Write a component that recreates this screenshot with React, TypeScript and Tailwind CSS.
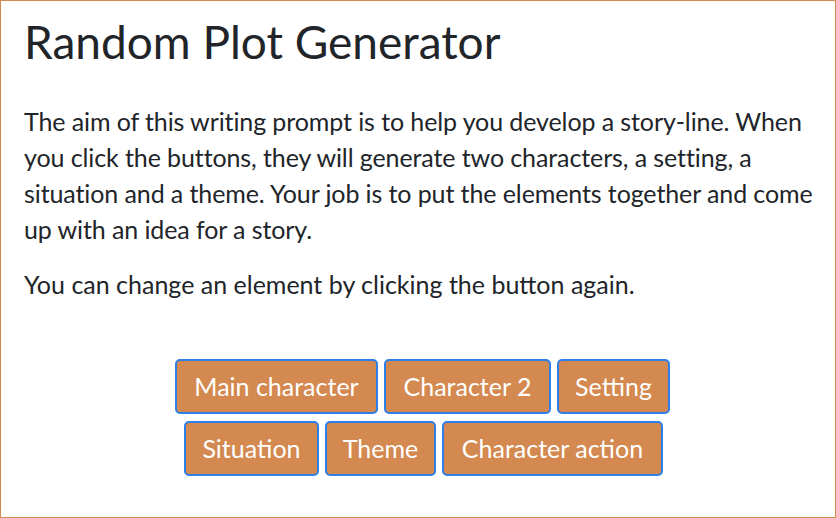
import React from "react";

const btn =
  "h-[55px] rounded-[5px] border-2 border-[#2f7fe8] bg-[#d3894f] text-white text-[25px] leading-none flex items-center justify-center";

export default function App() {
  return (
    <div
      className="w-[836px] h-[518px] border border-[#d3894f] bg-white text-[#212529] px-[23px] overflow-hidden"
      style={{ fontFamily: "Lato, 'Open Sans', sans-serif" }}
    >
      <h1 className="text-[46px] leading-[52px] mt-[15px] mb-[35px] font-normal">
        Random Plot Generator
      </h1>
      <p className="text-[25px] leading-[36px] mb-[19px] whitespace-nowrap tracking-[-0.1px]">
        The aim of this writing prompt is to help you develop a story-line. When
        <br />
        you click the buttons, they will generate two characters, a setting, a
        <br />
        situation and a theme. Your job is to put the elements together and come
        <br />
        up with an idea for a story.
      </p>
      <p className="text-[25px] leading-[36px]">
        You can change an element by clicking the button again.
      </p>
      <div className="mt-[57px] flex flex-col gap-[7px]">
        <div className="flex gap-[6px] pl-[151px]">
          <button className={`${btn} w-[203px]`}>Main character</button>
          <button className={`${btn} w-[167px]`}>Character 2</button>
          <button className={`${btn} w-[113px]`}>Setting</button>
        </div>
        <div className="flex gap-[6px] pl-[160px]">
          <button className={`${btn} w-[135px]`}>Situation</button>
          <button className={`${btn} w-[111px]`}>Theme</button>
          <button className={`${btn} w-[221px]`}>Character action</button>
        </div>
      </div>
    </div>
  );
}
